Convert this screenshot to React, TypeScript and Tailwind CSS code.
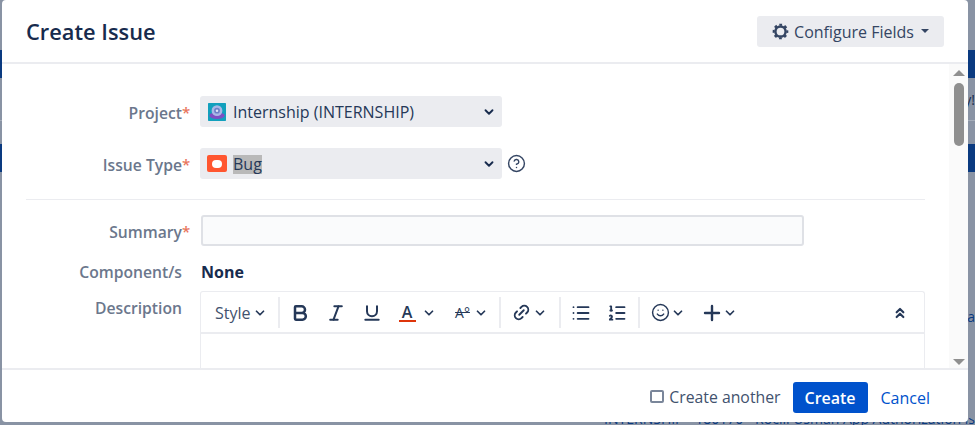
import { Bold, ChevronDown, ChevronsUp, Italic, Link2, List, ListOrdered, Plus, Smile, Underline, CircleHelp } from "lucide-react";

function GearIcon() {
  return (
    <svg viewBox="0 0 18 18" className="w-[17px] h-[17px]" fill="none" stroke="#344563">
      <circle cx="9" cy="9" r="5.4" strokeWidth="2.6" />
      <circle cx="9" cy="9" r="7.2" strokeWidth="2.2" strokeDasharray="2.9 2.75" strokeDashoffset="1.45" />
    </svg>
  );
}

function ProjectAvatar() {
  return (
    <svg viewBox="0 0 20 20" className="w-[20px] h-[18px] rounded-[2px]">
      <rect width="20" height="20" fill="#12a0bd" />
      <ellipse cx="10" cy="14" rx="8.5" ry="3.8" fill="#7c4fc4" />
      <circle cx="10" cy="8.5" r="6" fill="#a9b8e6" />
      <circle cx="10" cy="8.5" r="3.2" fill="#6d7fc8" />
      <circle cx="10" cy="8.5" r="1.4" fill="#dfe6fa" />
    </svg>
  );
}

function BugAvatar() {
  return (
    <div className="w-[20px] h-[17px] rounded-[2px] bg-[#ff5630] flex items-center justify-center">
      <div className="w-[10px] h-[8px] rounded-full bg-white" />
    </div>
  );
}

function FieldLabel({ text, required }: { text: string; required?: boolean }) {
  return (
    <div className="w-[180px] shrink-0 text-right text-[15.7px] font-semibold text-[#6b778c] leading-[20px]">
      <span className="relative">
        {text}
        {required && <span className="absolute left-full top-0 text-[#e8755c] text-[15px]">*</span>}
      </span>
    </div>
  );
}

function SelectBox({ avatar, children }: { avatar: React.ReactNode; children: React.ReactNode }) {
  return (
    <div className="w-[302px] h-[31px] rounded-[3px] bg-[#ebecf0] flex items-center pl-[7px] pr-[6px] text-[16px] text-[#253858]">
      {avatar}
      <div className="ml-[6px] flex-1">{children}</div>
      <ChevronDown className="w-[14px] h-[14px] text-[#172b4d]" strokeWidth={3.2} />
    </div>
  );
}

function Caret({ className }: { className?: string }) {
  return <ChevronDown className={`w-[14px] h-[14px] text-[#253858] ${className ?? ""}`} strokeWidth={3} />;
}

function Sep({ className }: { className?: string }) {
  return <div className={`w-[2px] h-[31px] bg-[#ebecf0] ${className ?? ""}`} />;
}

export default function App() {
  return (
    <div className="relative w-[975px] h-[425px] overflow-hidden bg-[#8993a4] font-['Open_Sans',sans-serif]">
      {/* page behind the dialog */}
      <div className="flex flex-col h-full">
        <div className="mt-[50px] h-[28px] bg-[#0a3a80]" />
        <div className="h-[43px] border-b border-[#a5adba] flex items-center justify-end text-[14px] text-[#172b4d]">y!</div>
        <div className="mt-[23px] h-[28px] bg-[#0a3a80]" />
        <div className="mt-[135px] flex justify-end text-[14px] text-[#0a3a80] leading-[20px]">a</div>
        <div className="mt-auto h-[7px] overflow-hidden text-right text-[14px] leading-[12px] text-[#0a3a80] whitespace-nowrap underline">
          <div className="mt-[-5px]">INTERNSHIP - 180170 - Rocill Usman App Authorization is</div>
        </div>
      </div>

      {/* dialog */}
      <div className="absolute left-[2px] top-0 w-[966px] h-[422px] bg-white rounded-[4px] flex flex-col text-[#172b4d]">
        <div className="h-[64px] shrink-0 border-b-2 border-[#ebecf0] flex items-center justify-between pl-[24px] pr-[24px]">
          <h2 className="text-[21.8px] font-semibold text-[#172b4d] mt-[2px]">Create Issue</h2>
          <div className="w-[187px] h-[31px] rounded-[3px] bg-[#ebecf0] flex items-center justify-center text-[16px] text-[#344563]">
            <GearIcon />
            <span className="ml-[5px] mt-[1px]">Configure Fields</span>
            <span className="ml-[7px] w-0 h-0 border-x-[4.5px] border-x-transparent border-t-[4.5px] border-t-[#344563]" />
          </div>
        </div>

        <div className="flex-1 min-h-0 flex overflow-hidden">
          <div className="flex-1 min-w-0 pl-[24px] pt-[32px]">
            <div className="flex items-center">
              <div className="ml-[-24px] pt-[2px] flex items-center">
                <FieldLabel text="Project" required />
              </div>
              <div className="ml-[18px]">
                <SelectBox avatar={<ProjectAvatar />}>Internship (INTERNSHIP)</SelectBox>
              </div>
            </div>
            <div className="flex items-center mt-[21px]">
              <div className="ml-[-24px] pt-[2px] flex items-center">
                <FieldLabel text="Issue Type" required />
              </div>
              <div className="ml-[18px]">
                <SelectBox avatar={<BugAvatar />}>
                  <span className="bg-[#b9b9b9] inline-block h-[19px] leading-[19px]">Bug</span>
                </SelectBox>
              </div>
              <CircleHelp className="ml-[5px] w-[19px] h-[19px] text-[#344563]" strokeWidth={1.8} />
            </div>
            <div className="mt-[20px] w-[899px] h-px bg-[#ebecf0]" />
            <div className="flex items-center mt-[15px]">
              <div className="ml-[-24px] pt-[2px] flex items-center">
                <FieldLabel text="Summary" required />
              </div>
              <div className="ml-[19px] w-[603px] h-[31px] rounded-[3px] border-2 border-[#dfe1e6] bg-[#fafbfc]" />
            </div>
            <div className="flex items-center mt-[16px]">
              <div className="ml-[-24px] flex items-center">
                <FieldLabel text="Component/s" />
              </div>
              <div className="ml-[19px] text-[16px] font-bold text-[#172b4d] leading-[20px]">None</div>
            </div>
            <div className="flex mt-[9px]">
              <div className="ml-[-24px] pt-[7px]">
                <FieldLabel text="Description" />
              </div>
              <div className="ml-[18px] w-[725px] h-[90px] rounded-t-[3px] border border-b-0 border-[#ebecf0]">
                <div className="h-[42px] border-b-2 border-[#ebecf0] flex items-center pl-[14px] pt-[1px] text-[#253858]">
                  <span className="text-[16px] text-[#42526e]">Style</span>
                  <Caret className="ml-[2px]" />
                  <Sep className="ml-[11px]" />
                  <Bold className="ml-[10px] w-[20px] h-[20px]" strokeWidth={3} />
                  <Italic className="ml-[16px] w-[20px] h-[20px]" strokeWidth={2.4} />
                  <Underline className="ml-[16px] w-[20px] h-[20px]" strokeWidth={2.4} />
                  <span className="ml-[17px] w-[17px] text-center text-[16px] font-semibold leading-[16px] border-b-2 border-[#de350b]">A</span>
                  <Caret className="ml-[6px]" />
                  <span className="ml-[18px] w-[18px] text-center text-[14px] leading-[14px] line-through">A°</span>
                  <Caret className="ml-[2px]" />
                  <Sep className="ml-[11px]" />
                  <Link2 className="ml-[11px] w-[19px] h-[19px] -rotate-45" strokeWidth={2.4} />
                  <Caret className="ml-[2px]" />
                  <Sep className="ml-[12px]" />
                  <List className="ml-[10px] w-[20px] h-[20px]" strokeWidth={2.2} />
                  <ListOrdered className="ml-[16px] w-[20px] h-[20px]" strokeWidth={2.2} />
                  <Sep className="ml-[11px]" />
                  <Smile className="ml-[11px] w-[19px] h-[19px]" strokeWidth={1.8} />
                  <Caret className="ml-[1px]" />
                  <Plus className="ml-[15px] w-[24px] h-[24px]" strokeWidth={2.4} />
                  <Caret className="ml-[-1px]" />
                  <ChevronsUp className="ml-[155px] w-[16px] h-[16px]" strokeWidth={3.2} />
                </div>
              </div>
            </div>
          </div>

          {/* scrollbar */}
          <div className="w-[19px] shrink-0 bg-[#fafafa] flex flex-col items-center pt-[6px] pb-[3px]">
            <span className="w-0 h-0 border-x-[6px] border-x-transparent border-b-[6px] border-b-[#8f8f8f]" />
            <div className="mt-[7px] w-[10px] h-[63px] rounded-full bg-[#8f8f8f]" />
            <span className="mt-auto w-0 h-0 border-x-[6px] border-x-transparent border-t-[6px] border-t-[#8f8f8f]" />
          </div>
        </div>

        <div className="h-[54px] shrink-0 border-t-2 border-[#ebecf0] flex items-center justify-end pr-[38px] pt-[3px] text-[16px]">
          <span className="w-[14px] h-[13px] rounded-[2px] border-2 border-[#7a869a] bg-white mb-[2px]" />
          <span className="ml-[5px] text-[15.8px] text-[#42526e]">Create another</span>
          <button className="ml-[12px] w-[75px] h-[31px] rounded-[3px] bg-[#0052cc] text-white font-semibold">Create</button>
          <span className="ml-[13px] text-[#0052cc]">Cancel</span>
        </div>
      </div>
    </div>
  );
}
